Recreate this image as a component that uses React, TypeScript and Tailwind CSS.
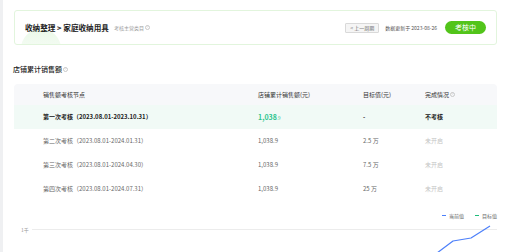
import React from 'react';

const rows = [
  { name: '第一次考核（2023.08.01-2023.10.31）', value: '1,038', frac: '.9', target: '-', status: '不考核', active: true },
  { name: '第二次考核（2023.08.01-2024.01.31）', value: '1,038.9', frac: '', target: '2.5 万', status: '未开启', active: false },
  { name: '第三次考核（2023.08.01-2024.04.30）', value: '1,038.9', frac: '', target: '7.5 万', status: '未开启', active: false },
  { name: '第四次考核（2023.08.01-2024.07.31）', value: '1,038.9', frac: '', target: '25 万', status: '未开启', active: false },
];

function Info({ className = '' }: { className?: string }) {
  return (
    <span className={`inline-flex items-center justify-center rounded-full border border-[#c8c8c8] text-[#b0b0b0] w-[5px] h-[5px] text-[3px] leading-none ${className}`}>?</span>
  );
}

export default function App() {
  return (
    <div
      className="flex w-[515px] h-[252px] overflow-hidden bg-white"
      style={{ fontFamily: '"Noto Sans CJK SC", "Noto Sans", sans-serif' }}
    >
      <div className="w-[3px] shrink-0 bg-[#eff0f2]" />
      <div className="flex-1 pl-[11px] pr-[18px] flex flex-col">
        {/* header card */}
        <div className="mt-[10px] h-[35px] border border-[#e2f5dd] rounded-[3px] relative overflow-hidden flex items-center justify-between pl-[10px] pr-[10px]">
          <div className="absolute left-[6px] top-[18px] w-[40px] h-[40px] rounded-full bg-gradient-to-b from-[#e6f7e3] to-white opacity-80" />
          <div className="relative flex items-center gap-[5px]">
            <span className="text-[7.6px] font-bold text-[#222] leading-none">收纳整理 &gt; 家庭收纳用具</span>
            <span className="flex items-center gap-[1px] text-[5px] text-[#999] leading-none">
              考核主营类目<Info />
            </span>
          </div>
          <div className="relative flex items-center">
            <span className="h-[10px] px-[4px] border border-[#d9d9d9] bg-[#f5f5f5] rounded-[1px] text-[5px] text-[#666] flex items-center leading-none">&lt; 上一周期</span>
            <span className="ml-[6px] text-[5px] text-[#555] leading-none">数据更新于 2023-08-26</span>
            <span className="ml-[8px] w-[41px] h-[13px] rounded-full bg-[#52c41a] text-white text-[7px] flex items-center justify-center leading-none">考核中</span>
          </div>
        </div>

        {/* section title */}
        <div className="mt-[19px] h-[10px] flex items-center -ml-[1px]">
          <span className="text-[7px] font-medium text-[#222] leading-none">店铺累计销售额</span>
          <Info className="ml-[1px]" />
        </div>

        {/* table */}
        <div className="mt-[10px] w-[483px] text-[6px] leading-none">
          <div className="grid grid-cols-[244px_105px_62px_1fr] h-[21px] items-center bg-[#f7f8fa] rounded-t-[4px] text-[#333]">
            <span className="pl-[29px]">销售额考核节点</span>
            <span>店铺累计销售额(元)</span>
            <span>目标值(元)</span>
            <span className="flex items-center gap-[1px]">完成情况<Info /></span>
          </div>
          {rows.map((r, i) => (
            <div
              key={i}
              className={`grid grid-cols-[244px_105px_62px_1fr] h-[24px] items-center ${r.active ? 'bg-[#f1faf6] text-[#222] font-bold' : 'text-[#666]'}`}
            >
              <span className="pl-[29px]">{r.name}</span>
              {r.active ? (
                <span className="text-[#2cc58e] text-[7px]">
                  {r.value}
                  <span className="text-[4.5px] font-normal">{r.frac}</span>
                </span>
              ) : (
                <span>{r.value}</span>
              )}
              <span>{r.target}</span>
              <span className={r.active ? '' : 'text-[#c4c4c4]'}>{r.status}</span>
            </div>
          ))}
        </div>

        {/* chart */}
        <div className="relative mt-[12px] w-[483px] flex-1">
          <div className="flex justify-end items-center gap-[11px] text-[5px] text-[#666] leading-none">
            <span className="flex items-center gap-[3px]">
              <span className="w-[4px] h-[1.5px] bg-[#4c7ffa]" />当前值
            </span>
            <span className="flex items-center gap-[3px]">
              <span className="w-[4px] h-[1.5px] bg-[#1ebc7a]" />目标值
            </span>
          </div>
          <div className="mt-[9px] flex items-center">
            <span className="w-[18px] pl-[7px] text-[5px] text-[#999] leading-none">1千</span>
            <div className="flex-1 h-[1px] bg-[#ececec]" />
          </div>
          <svg className="absolute left-0 top-0" width="483" height="40" viewBox="0 0 483 40">
            <polyline
              points="423,40 439,28 457,25 476,13"
              fill="none"
              stroke="#4c7ffa"
              strokeWidth="1.2"
              strokeLinejoin="round"
            />
          </svg>
        </div>
      </div>
    </div>
  );
}
